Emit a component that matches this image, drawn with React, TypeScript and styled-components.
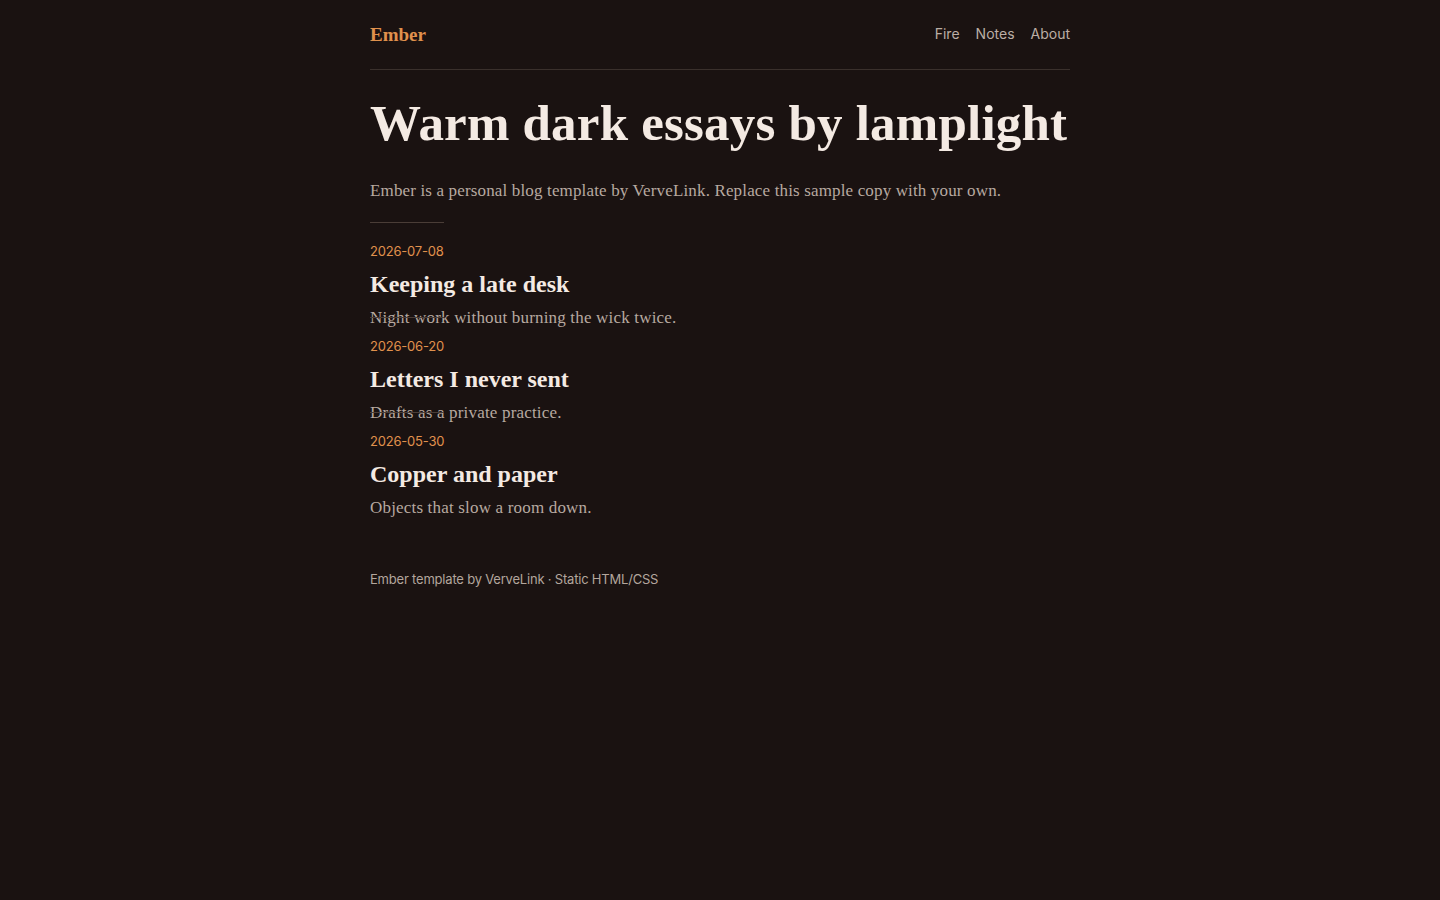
import React, {FC} from 'react';
import styled, {createGlobalStyle} from "styled-components";

const GlobalStyle = createGlobalStyle`
  html, body {
    margin: 0;
    padding: 0;
    background: #1a1211;
    min-height: 100%;
  }
  body {
    font-family: Georgia, "Liberation Serif", serif;
    color: #f3e9e2;
  }
`

const Page = styled.div`
  width: 700px;
  margin: 0 auto;
  display: flex;
  flex-direction: column;
`

const Header = styled.header`
  display: flex;
  justify-content: space-between;
  align-items: center;
  padding: 22px 0 22px;
  border-bottom: 1px solid #3a302c;
`

const Brand = styled.a`
  font-family: Georgia, "Liberation Serif", serif;
  font-weight: 700;
  font-size: 19px;
  line-height: 24px;
  margin-top: 1px;
  color: #e0914d;
  text-decoration: none;
`

const Nav = styled.nav`
  display: flex;
  gap: 16px;
`

const NavLink = styled.a`
  font-family: Inter, "Liberation Sans", sans-serif;
  font-size: 14px;
  line-height: 22px;
  margin-top: -2px;
  color: #bcaea5;
  text-decoration: none;
`

const Title = styled.h1`
  margin: 23px 0 0;
  font-family: Georgia, "Liberation Serif", serif;
  font-weight: 700;
  font-size: 51px;
  line-height: 60px;
  letter-spacing: 0.2px;
  color: #f4eae3;
  white-space: nowrap;
`

const Intro = styled.p`
  margin: 25px 0 0;
  font-size: 17px;
  line-height: 26px;
  letter-spacing: 0.15px;
  color: #b7a9a0;
`

const Posts = styled.div`
  margin-top: 37px;
  display: flex;
  flex-direction: column;
  gap: 5px;
`

const Post = styled.article`
  position: relative;
  display: flex;
  flex-direction: column;

  &::before {
    content: "";
    position: absolute;
    left: 0;
    top: -19px;
    width: 74px;
    height: 1px;
    background: #4a3d37;
  }
`

const PostDate = styled.time`
  font-family: Inter, "Liberation Sans", sans-serif;
  font-size: 13px;
  line-height: 20px;
  letter-spacing: -0.2px;
  color: #e0914d;
`

const PostTitle = styled.h2`
  margin: 9px 0 0;
  font-size: 24px;
  line-height: 28px;
  font-weight: 700;
  color: #f4eae3;
`

const Excerpt = styled.p`
  margin: 7px 0 0;
  font-size: 17px;
  line-height: 26px;
  letter-spacing: 0.18px;
  color: #b7a9a0;
`

const Footer = styled.footer`
  margin-top: 48px;
  font-family: Inter, "Liberation Sans", sans-serif;
  font-size: 13px;
  line-height: 20px;
  letter-spacing: -0.2px;
  color: #b3a69d;
`

const posts = [
    {date: "2026-07-08", title: "Keeping a late desk", excerpt: "Night work without burning the wick twice."},
    {date: "2026-06-20", title: "Letters I never sent", excerpt: "Drafts as a private practice."},
    {date: "2026-05-30", title: "Copper and paper", excerpt: "Objects that slow a room down."},
]

const App: FC = () => {
    return (
        <>
            <GlobalStyle/>
            <Page>
                <Header>
                    <Brand href="#">Ember</Brand>
                    <Nav>
                        <NavLink href="#">Fire</NavLink>
                        <NavLink href="#">Notes</NavLink>
                        <NavLink href="#">About</NavLink>
                    </Nav>
                </Header>
                <Title>Warm dark essays by lamplight</Title>
                <Intro>Ember is a personal blog template by VerveLink. Replace this sample copy with your own.</Intro>
                <Posts>
                    {posts.map(p => (
                        <Post key={p.date}>
                            <PostDate>{p.date}</PostDate>
                            <PostTitle>{p.title}</PostTitle>
                            <Excerpt>{p.excerpt}</Excerpt>
                        </Post>
                    ))}
                </Posts>
                <Footer>Ember template by VerveLink · Static HTML/CSS</Footer>
            </Page>
        </>
    );
};

export default App;
